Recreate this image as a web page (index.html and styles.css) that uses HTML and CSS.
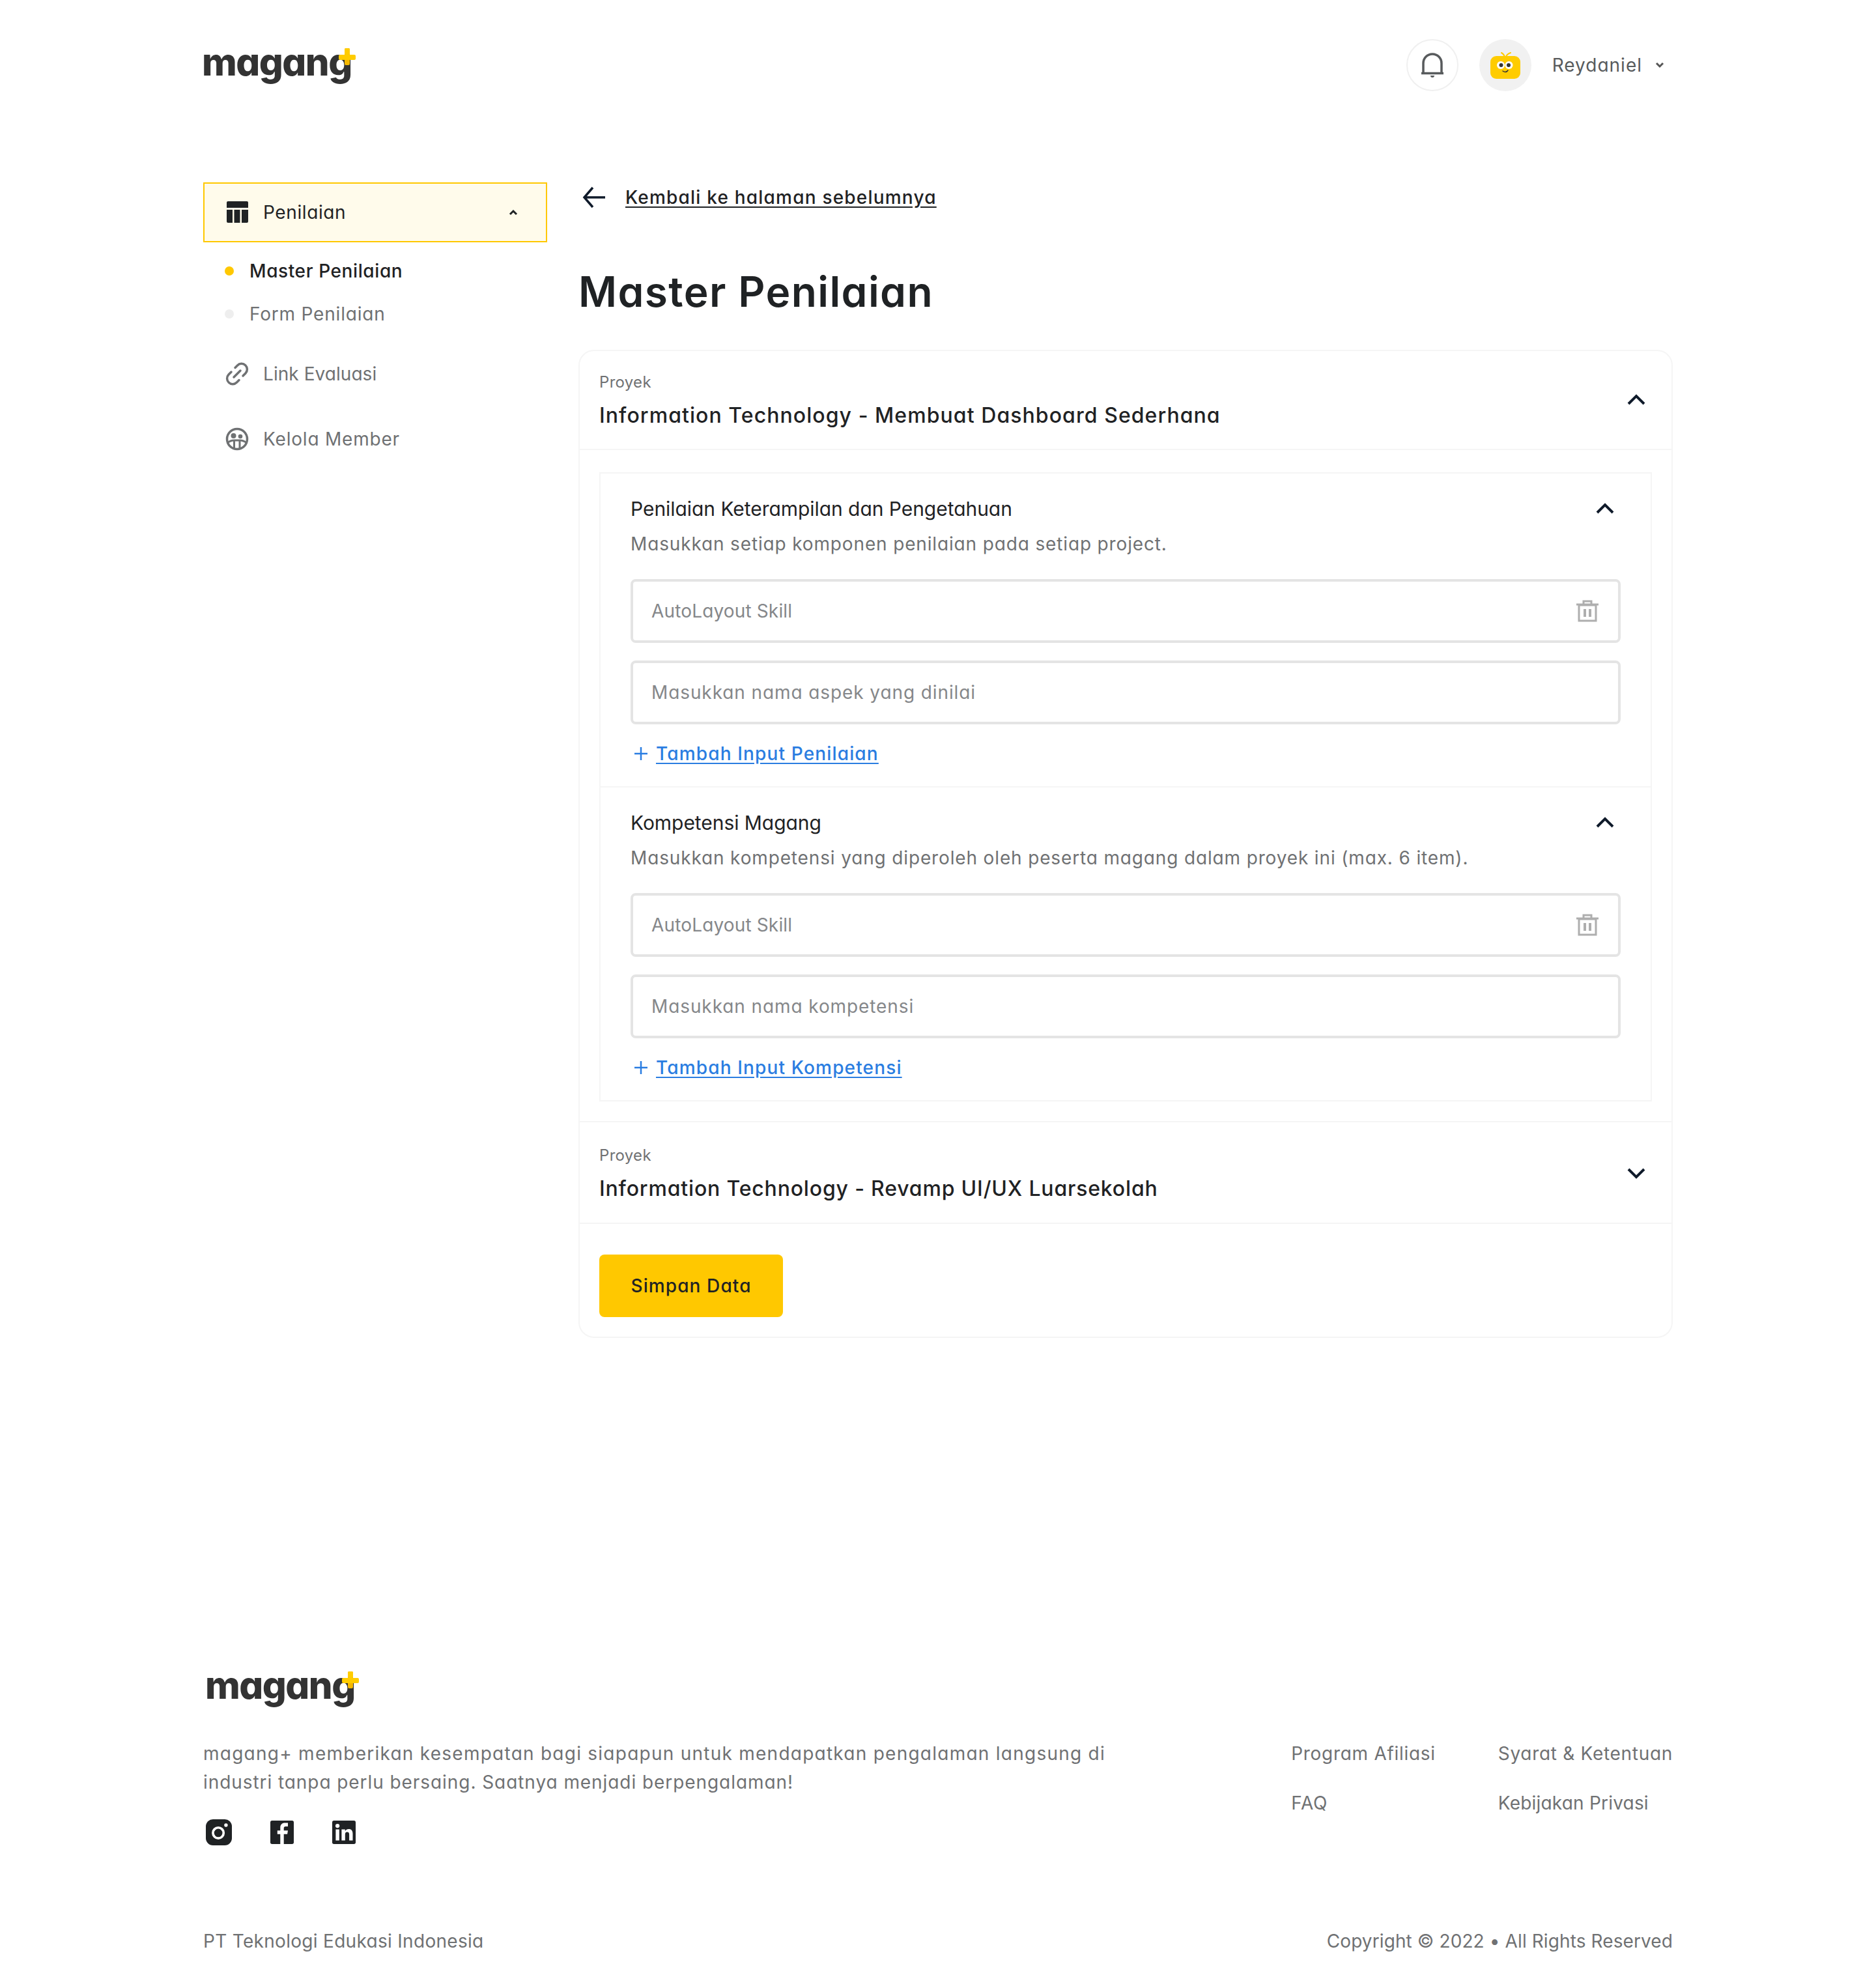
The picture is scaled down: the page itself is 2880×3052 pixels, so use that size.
FILE: index.html
```html
<!DOCTYPE html>
<html lang="id">
<head>
<meta charset="utf-8">
<title>Master Penilaian</title>
<link rel="stylesheet" href="styles.css">
</head>
<body>
<div class="page">
  <header class="topbar">
    <a class="logo logo-top"><span class="logo-word">magang</span><svg class="logo-plus" viewBox="0 0 26 26"><rect x="9" y="0" width="8" height="26" rx="2" fill="#f5b800"/><rect x="9" y="0" width="8" height="10" rx="2" fill="#ffcc00"/><rect x="0" y="10" width="26" height="8" rx="2" fill="#ffcc00"/></svg></a>
    <div class="top-actions">
      <span class="bell-btn"><svg width="40" height="40" viewBox="0 0 40 40" fill="none" stroke="#585b5d" stroke-width="3.500"><path d="M6 32V17a14 14 0 0 1 28 0v15"/><path d="M3 32.5h34"/><path d="M17 36h6a3 3 0 0 1-6 0z" fill="#585b5d" stroke="none"/></svg></span>
      <span class="avatar"><svg width="48" height="48" viewBox="0 0 48 48"><path d="M23 11c-1-3-3-5-5-6M25 11c1-3 4-5 7-6" fill="none" stroke="#ffcc00" stroke-width="2" stroke-linecap="round"/><rect x="1" y="10" width="46" height="35" rx="9" fill="#ffcc00"/><circle cx="17" cy="24" r="6" fill="#fff"/><circle cx="29.500" cy="24" r="6" fill="#fff"/><circle cx="17.500" cy="24" r="3" fill="#333"/><circle cx="29" cy="24" r="3" fill="#333"/><path d="M20 33c3 2 6 2 8-1" fill="none" stroke="#333" stroke-width="1.500" stroke-linecap="round"/></svg></span>
      <span class="username">Reydaniel</span>
      <svg class="name-caret" width="14" height="10" viewBox="0 0 14 10" fill="none" stroke="#555" stroke-width="3"><path d="M2 2l5 5 5-5"/></svg>
    </div>
  </header>

  <div class="layout">
    <aside class="sidebar">
      <div class="nav-active">
        <svg class="nav-icon" viewBox="0 0 36 36" fill="#1f2224"><path d="M2 2a2 2 0 0 1 2-2h29a2 2 0 0 1 2 2v8H2z" transform="translate(0 1)"/><path d="M2 14h9v20H4a2 2 0 0 1-2-2zM13.500 14h9v20h-9zM25 14h10v18a2 2 0 0 1-2 2h-8z"/></svg>
        <span class="nav-label-active">Penilaian</span>
        <svg class="nav-caret" width="14" height="10" viewBox="0 0 14 10" fill="none" stroke="#1f2224" stroke-width="3"><path d="M2 8l5-5 5 5"/></svg>
      </div>
      <ul class="subnav">
        <li class="subnav-item is-current"><span class="dot"></span>Master Penilaian</li>
        <li class="subnav-item"><span class="dot"></span>Form Penilaian</li>
      </ul>
      <div class="nav-item nav-link">
        <svg class="nav-icon" viewBox="0 0 36 36" fill="none" stroke="#6f7173" stroke-width="3.500" stroke-linecap="round"><path d="M15 8.500l3.500-3.500a8.500 8.500 0 0 1 12.500 12l-4 4"/><path d="M21 27.500l-3.500 3.500a8.500 8.500 0 0 1-12.500-12l4-4"/><path d="M13 23l10-10"/></svg>
        <span>Link Evaluasi</span>
      </div>
      <div class="nav-item nav-member">
        <svg class="nav-icon" viewBox="0 0 36 36" fill="none" stroke="#6f7173" stroke-width="3.500"><circle cx="18" cy="18" r="15.500"/><circle cx="12.500" cy="13" r="4" fill="#6f7173" stroke="none"/><circle cx="23" cy="14" r="3.300" fill="#6f7173" stroke="none"/><path d="M3 24c3-2.500 7-4 10.500-4h9c3.500 0 7 1.500 10.500 4" stroke-width="3"/><path d="M13.500 20v13M22 20v13" stroke-width="3"/></svg>
        <span>Kelola Member</span>
      </div>
    </aside>

    <main class="content">
      <a class="back"><svg width="36" height="36" viewBox="0 0 36 36" fill="none" stroke="#0f1a2a" stroke-width="3.500"><path d="M35 18H4M16 3L3 18l13 15"/></svg><span class="back-text">Kembali ke halaman sebelumnya</span></a>
      <h1 class="title">Master Penilaian</h1>

      <section class="card">
        <div class="project-head">
          <div>
            <div class="project-kicker">Proyek</div>
            <div class="project-name">Information Technology - Membuat Dashboard Sederhana</div>
          </div>
          <svg class="chev" width="28" height="18" viewBox="0 0 28 18" fill="none" stroke="#0f1a2a" stroke-width="4"><path d="M2 15L14 3l12 12"/></svg>
        </div>

        <div class="project-body">
          <div class="inner">
            <div class="block block-first">
              <div class="block-head"><span class="block-title">Penilaian Keterampilan dan Pengetahuan</span><svg class="chev" width="28" height="18" viewBox="0 0 28 18" fill="none" stroke="#0f1a2a" stroke-width="4"><path d="M2 15L14 3l12 12"/></svg></div>
              <p class="block-desc">Masukkan setiap komponen penilaian pada setiap project.</p>
              <div class="field field-filled"><span>AutoLayout Skill</span><svg width="34" height="34" viewBox="0 0 34 34" fill="none" stroke="#aeaeae" stroke-width="3"><path d="M0 7h34"/><path d="M11 6V2h12v4"/><path d="M4 8v24h26V8z"/><path d="M13 14v12M21 14v12" stroke-width="4"/></svg></div>
              <div class="field"><span>Masukkan nama aspek yang dinilai</span></div>
              <div class="add"><svg width="22" height="22" viewBox="0 0 22 22" stroke="#2a7de1" stroke-width="2.500"><path d="M11 1v20M1 11h20"/></svg><a class="add-link">Tambah Input Penilaian</a></div>
            </div>
            <div class="block block-second">
              <div class="block-head"><span class="block-title">Kompetensi Magang</span><svg class="chev" width="28" height="18" viewBox="0 0 28 18" fill="none" stroke="#0f1a2a" stroke-width="4"><path d="M2 15L14 3l12 12"/></svg></div>
              <p class="block-desc">Masukkan kompetensi yang diperoleh oleh peserta magang dalam proyek ini (max. 6 item).</p>
              <div class="field field-filled"><span>AutoLayout Skill</span><svg width="34" height="34" viewBox="0 0 34 34" fill="none" stroke="#aeaeae" stroke-width="3"><path d="M0 7h34"/><path d="M11 6V2h12v4"/><path d="M4 8v24h26V8z"/><path d="M13 14v12M21 14v12" stroke-width="4"/></svg></div>
              <div class="field"><span>Masukkan nama kompetensi</span></div>
              <div class="add"><svg width="22" height="22" viewBox="0 0 22 22" stroke="#2a7de1" stroke-width="2.500"><path d="M11 1v20M1 11h20"/></svg><a class="add-link">Tambah Input Kompetensi</a></div>
            </div>
          </div>
        </div>

        <div class="project-head project-head-2">
          <div>
            <div class="project-kicker">Proyek</div>
            <div class="project-name project-name-2">Information Technology - Revamp UI/UX Luarsekolah</div>
          </div>
          <svg class="chev" width="28" height="18" viewBox="0 0 28 18" fill="none" stroke="#0f1a2a" stroke-width="4"><path d="M2 3l12 12L26 3"/></svg>
        </div>

        <div class="card-actions"><button class="save">Simpan Data</button></div>
      </section>
    </main>
  </div>

  <footer class="footer">
    <a class="logo logo-footer"><span class="logo-word">magang</span><svg class="logo-plus" viewBox="0 0 26 26"><rect x="9" y="0" width="8" height="26" rx="2" fill="#f5b800"/><rect x="9" y="0" width="8" height="10" rx="2" fill="#ffcc00"/><rect x="0" y="10" width="26" height="8" rx="2" fill="#ffcc00"/></svg></a>
    <div class="footer-main">
      <div class="footer-about">
        <p class="footer-text"><span class="footer-line-1">magang+ memberikan kesempatan bagi siapapun untuk mendapatkan pengalaman langsung di</span> <span class="footer-line-2">industri tanpa perlu bersaing. Saatnya menjadi berpengalaman!</span></p>
        <div class="socials">
          <svg width="40" height="40" viewBox="0 0 44 44"><rect width="44" height="44" rx="12" fill="#1f2224"/><circle cx="21" cy="23" r="9" fill="none" stroke="#fff" stroke-width="4"/><circle cx="34" cy="10" r="3" fill="#fff"/></svg>
          <svg width="36" height="36" viewBox="0 0 40 40"><rect width="40" height="40" rx="3" fill="#1f2224"/><path d="M17 40V23h-5v-6h5v-5c0-5 3-8 8-8h5v6h-4c-2 0-3 1-3 3v4h7l-1 6h-6v17z" fill="#fff"/></svg>
          <svg width="36" height="36" viewBox="0 0 40 40"><rect width="40" height="40" rx="3" fill="#1f2224"/><circle cx="9" cy="9" r="3.500" fill="#fff"/><path d="M6 15h6v19H6zM16 15h6v3c1-2 3-3.500 6-3.500 5 0 7 3 7 8V34h-6V24c0-3-1-4.500-3.500-4.500S22 21 22 24v10h-6z" fill="#fff"/></svg>
        </div>
      </div>
      <nav class="footer-links">
        <div class="link-col"><a>Program Afiliasi</a><a>FAQ</a></div>
        <div class="link-col"><a>Syarat &amp; Ketentuan</a><a class="link-tight">Kebijakan Privasi</a></div>
      </nav>
    </div>
    <div class="footer-bottom"><span class="company">PT Teknologi Edukasi Indonesia</span><span class="copyright">Copyright © 2022 • All Rights Reserved</span></div>
  </footer>
</div>
</body>
</html>
```

FILE: styles.css
```css
* { box-sizing: border-box; }
html, body { margin: 0; padding: 0; background: #fff; }
body {
  font-family: "Inter", "Noto Sans", sans-serif;
  font-feature-settings: "cv11" 1;
  font-size: 28px;
  color: #1f2224;
}
p { margin: 0; }
.page {
  width: 2880px;
  height: 3052px;
  padding: 0 312px;
  display: flex;
  flex-direction: column;
}

/* logo */
.logo { position: relative; display: block; width: 240px; height: 70px; }
.logo-word {
  display: block;
  font-size: 58px;
  line-height: 70px;
  font-weight: 800;
  color: #333;
  letter-spacing: -1.500px;
}
.logo-plus { position: absolute; left: 210px; top: 14px; width: 26px; height: 26px; }
.logo-top { margin-bottom: 10px; margin-left: -2px; }

/* top bar */
.topbar {
  height: 200px;
  display: flex;
  align-items: center;
  justify-content: space-between;
}
.top-actions { display: flex; align-items: center; }
.bell-btn, .avatar {
  width: 80px; height: 80px; border-radius: 50%;
  display: flex; align-items: center; justify-content: center;
}
.bell-btn { border: 2px solid #f0f0f0; margin-right: 32px; }
.avatar { background: #f1f1f1; margin-right: 32px; }
.username { color: #585b5d; font-size: 28px; letter-spacing: 1px; margin-right: 20px; }
.name-caret { margin-right: 13px; }

/* layout */
.layout { display: flex; gap: 48px; margin-top: 80px; align-items: flex-start; }
.sidebar { width: 528px; flex: none; }
.content { width: 1680px; flex: none; }

.nav-active {
  height: 92px;
  border: 2px solid #ffc800;
  background: #fffbeb;
  display: flex;
  align-items: center;
  padding: 0 43px 0 32px;
}
.nav-icon { width: 36px; height: 36px; flex: none; }
.nav-label-active { margin-left: 22px; letter-spacing: 0.6px; flex: 1; }
.subnav { list-style: none; margin: 11px 0 0; padding: 0 0 0 33px; }
.subnav-item { height: 66px; display: flex; align-items: center; color: #6f7173; letter-spacing: 0.8px; }
.subnav-item.is-current { color: #1f2224; font-weight: 500; letter-spacing: 0.6px; }
.dot { width: 14px; height: 14px; border-radius: 50%; background: #eee; margin-right: 24px; }
.is-current .dot { background: #ffc800; }
.nav-item { display: flex; align-items: center; gap: 22px; padding-left: 34px; color: #6f7173; height: 40px; }
.nav-link { margin-top: 39px; letter-spacing: 0.05px; }
.nav-member { margin-top: 60px; letter-spacing: 0.8px; }

/* back link */
.back { display: flex; align-items: center; height: 46px; gap: 30px; padding-left: 6px; }
.back-text { font-weight: 500; text-decoration: underline; text-underline-offset: 4px; letter-spacing: 1.200px; }
.title { margin: 80px 0 0; font-size: 64px; line-height: 84px; font-weight: 600; letter-spacing: 1.400px; }

/* card */
.card {
  margin-top: 47px;
  border: 2px solid #f5f5f5;
  border-radius: 24px;
  height: 1517px;
}
.project-head {
  display: flex;
  align-items: center;
  justify-content: space-between;
  height: 152px;
  padding: 0 40px 0 30px;
  border-bottom: 2px solid #f5f5f5;
}
.project-kicker { font-size: 24px; line-height: 32px; color: #6f7173; letter-spacing: 0.3px; margin-top: 4px; }
.project-name { font-size: 32px; line-height: 48px; font-weight: 500; letter-spacing: 1.060px; margin-top: 11px; }
.project-name-2 { letter-spacing: 0.820px; }
.chev { flex: none; }
.project-body { padding: 34px 30px 30px; }
.inner { border: 2px solid #f5f5f5; height: 966px; }
.block { padding: 32px 46px 0 46px; }
.block-first { height: 482px; border-bottom: 2px solid #f5f5f5; }
.block-second { padding-top: 32px; }
.block-head { display: flex; align-items: center; justify-content: space-between; height: 44px; padding-right: 10px; }
.block-title { font-size: 30px; letter-spacing: -0.050px; }
.block-desc { margin-top: 10px; margin-bottom: 32px; line-height: 44px; color: #6f7173; letter-spacing: 0.850px; }
.field {
  height: 98px;
  border: 4px solid #e4e4e4;
  border-radius: 8px;
  padding: 0 30px 0 28px;
  margin-bottom: 27px;
  display: flex;
  align-items: center;
  justify-content: space-between;
  color: #85878a;
  letter-spacing: 0.900px;
}
.field-filled { letter-spacing: 0.150px; }
.add { display: flex; align-items: center; gap: 12px; padding-left: 5px; margin-top: -4px; height: 44px; }
.add-link { color: #2a7de1; text-decoration: underline; text-underline-offset: 4px; letter-spacing: 1.150px; font-weight: 500; }
.project-head-2 { height: 158px; border-top: 2px solid #f5f5f5; padding-top: 2px; }
.card-actions { padding: 47px 30px 0; }
.save {
  width: 282px; height: 96px; border: 0; border-radius: 8px;
  background: #ffc800; color: #1f2224;
  font: 500 28px "Inter", sans-serif;
  font-feature-settings: "cv11" 1;
  letter-spacing: 1.100px;
}

/* footer */
.footer { margin-top: auto; padding-bottom: 50px; }
.logo-footer { margin-left: 3px; }
.footer-main { display: flex; justify-content: space-between; margin-top: 48px; }
.footer-about { width: 1420px; }
.footer-text { line-height: 44px; color: #6f7173; }
.footer-line-1 { letter-spacing: 1.250px; }
.footer-line-2 { letter-spacing: 0.930px; }
.socials { display: flex; align-items: center; gap: 59px; margin-top: 35px; padding-left: 4px; }
.footer-links { display: flex; gap: 96px; }
.link-col { display: flex; flex-direction: column; gap: 32px; color: #6f7173; letter-spacing: 0.700px; }
.link-col a { line-height: 44px; }
.link-col .link-tight { letter-spacing: 0.200px; }
.footer-bottom { display: flex; justify-content: space-between; margin-top: 125px; color: #6f7173; line-height: 44px; }
.company { letter-spacing: 0.300px; }
.copyright { letter-spacing: 0.100px; }
```
